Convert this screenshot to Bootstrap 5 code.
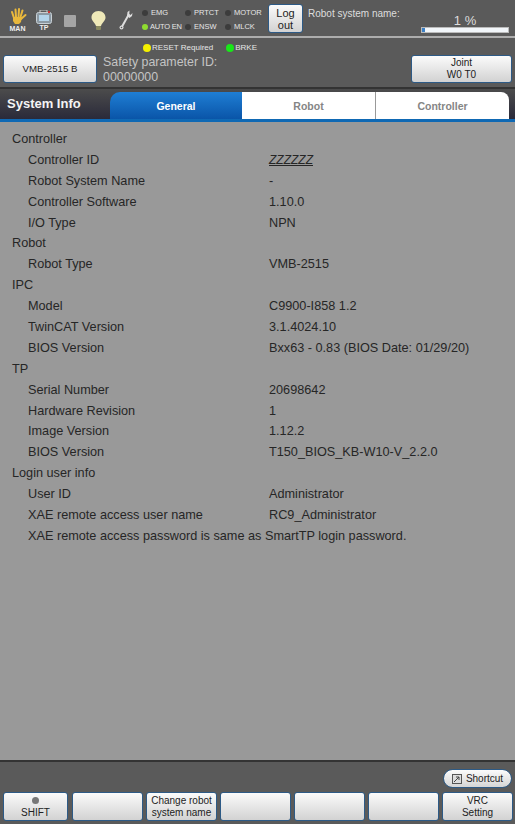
<!DOCTYPE html>
<html lang="en">
<head>
  <meta charset="UTF-8" />
  <title>System Info</title>
  <link href="https://cdn.jsdelivr.net/npm/bootstrap@5.3.0/dist/css/bootstrap.min.css" rel="stylesheet">
  <style>
    html, body { height: 824px; overflow: hidden; }
    body { width: 515px; background: #5a5a5a; font-family: "Liberation Sans", Arial, sans-serif; color: #222; }
    .top-bar { height: 38px; border-bottom: 2px solid #adadad; padding-left: 9px; }
    .tool-icon { flex: none; display: flex; flex-direction: column; align-items: center; color: #eee; font-size: 7px; line-height: 7px; font-weight: 700; }
    .led-grid { display: grid; grid-template-columns: 43px 40px 43px; grid-auto-rows: 14px; margin-left: 9px; margin-top: 6px; flex: none; }
    .led-item { display: flex; align-items: center; gap: 3px; font-size: 7.5px; color: #e6e6e6; white-space: nowrap; }
    .led-tight { gap: 2px; letter-spacing: -.2px; }
    .led { width: 6px; height: 6px; border-radius: 50%; background: #3c3c3c; flex: none; }
    .led-green { background: #8fdc30; }
    .grey-btn { background: linear-gradient(#fbfbfb, #d2d2d2); border: 1px solid #2d5a86; border-radius: 3px; color: #222; text-align: center; padding: 0; }
    .logout-btn { width: 35px; height: 29px; font-size: 11px; line-height: 12px; margin-top: 4px; flex: none; }
    .sys-name { font-size: 10px; color: #ddd; margin-left: 5px; margin-top: 6px; white-space: nowrap; width: 113px; flex: none; }
    .load-box { width: 88px; margin-top: 15px; flex: none; text-align: center; color: #ddd; font-size: 13px; line-height: 12px; }
    .load-track { height: 6px; background: #f2f6fa; border: 1px solid #bbb; }
    .load-fill { width: 3%; height: 100%; background: #3b7fc4; }
    .second-bar { height: 51px; border-bottom: 2px solid #333; padding: 0 3px; }
    .model-btn { width: 94px; height: 28px; font-size: 9.7px; margin-top: 17px; flex: none; }
    .joint-btn { width: 101px; height: 28px; font-size: 10px; line-height: 12px; margin-top: 17px; margin-left: auto; flex: none; }
    .safety-text { font-size: 12.4px; line-height: 15px; color: #c4c4c4; margin-left: 6px; margin-top: 17px; }
    .alarm-row { position: absolute; left: 140px; top: 4px; font-size: 8px; color: #e6e6e6; gap: 13px; white-space: nowrap; }
    .alarm-item { display: flex; align-items: center; gap: 1px; }
    .alarm-led { width: 8px; height: 8px; border-radius: 50%; flex: none; }
    .led-yellow { background: #f4f000; }
    .led-lime { background: #18e818; }
    .second-inner { position: relative; height: 100%; }
    .title-bar { height: 33px; background: linear-gradient(#4c4c4c, #2a2a3a); border-bottom: 3px solid #0f69b4; padding-top: 3px; }
    .title-text { width: 110px; flex: none; color: #f4f4f4; font-size: 13px; font-weight: 700; padding-left: 7px; line-height: 24px; }
    .tab-item { font-size: 10.5px; font-weight: 700; text-align: center; line-height: 29px; height: 27px; background: #fff; color: #858585; flex: none; }
    .tab-gen { width: 132px; background: linear-gradient(#1f7ed4, #0a55a8); color: #fff; border-radius: 10px 0 0 0; }
    .tab-robot { width: 134px; border-right: 1px solid #999; }
    .tab-ctrl { width: 133px; border-radius: 0 8px 0 0; }
    .info-area { height: 638px; background: #999; padding-top: 7px; font-size: 12.7px; color: #262626; }
    .info-row { display: flex; height: 20.9px; line-height: 21px; white-space: nowrap; }
    .info-head { padding-left: 12px; }
    .info-key { width: 269px; padding-left: 28px; flex: none; }
    .val-link { text-decoration: underline; font-style: italic; font-size: 12px; }
    .foot-area { height: 64px; border-top: 2px solid #333; padding: 0 2px 0 3px; }
    .shortcut-btn { width: 69px; height: 19px; border-radius: 10px; background: linear-gradient(#fbfbfb, #d5d5d5); border: 1px solid #2d5a86; font-size: 10px; margin: 7px 1px 4px auto; gap: 4px; color: #222; }
    .foot-btn { height: 29px; font-size: 10px; line-height: 12px; flex: none; width: 71px; }
    .foot-shift { width: 65px; margin-right: 1px; }
    .foot-led { width: 7px; height: 7px; border-radius: 50%; background: #777; display: block; margin: 2px auto 3px; }
  </style>
</head>
<body>
  <div class="top-bar d-flex">
    <div class="d-flex">
      <div class="tool-icon" style="width:17px;margin-top:7px">
        <svg width="18" height="18" viewBox="0 0 18 18"><g stroke="#e9b83c" stroke-width="2" stroke-linecap="round"><path d="M5 11 L3 5"/><path d="M7 10 L6.500 2.500"/><path d="M9.500 10 L10 2"/><path d="M11.500 10 L13.500 3.500"/><path d="M12 12 L16.500 8"/></g><path d="M4 10 H13 L12 15 L10 17 H6 L4 14Z" fill="#e9b83c"/></svg>
        <span>MAN</span>
      </div>
      <div class="tool-icon" style="width:16px;margin:10px 0 0 10px">
        <svg width="16" height="14" viewBox="0 0 16 14"><rect x=".5" y="2.500" width="15" height="11" rx="2" fill="#8c99a3" stroke="#c8d0d6"/><rect x="3" y="5" width="10" height="6" fill="#b4d4ea"/><rect x="4" y="0" width="7" height="2.500" fill="none" stroke="#ccc"/><rect x="12" y="1" width="2" height="2" fill="#c33"/></svg>
        <span>TP</span>
      </div>
      <svg style="margin:15px 0 0 12px" width="12" height="12" viewBox="0 0 12 12"><rect width="12" height="12" rx="1" fill="#a5a5a5"/></svg>
      <svg style="margin:11px 0 0 15px" width="15" height="20" viewBox="0 0 15 20"><path d="M7.500 0 C3 0 .5 3 .5 6.500 C.5 10 4 11.500 5 15 H10 C11 11.500 14.500 10 14.500 6.500 C14.500 3 12 0 7.500 0Z" fill="#efe9b8"/><rect x="5" y="15" width="5" height="4" rx="1" fill="#8a8a60"/></svg>
      <svg style="margin:10px 0 0 13px" width="14" height="20" viewBox="0 0 14 20"><path d="M2.500 17.500 L9.500 5" stroke="#ddd" stroke-width="2" stroke-linecap="round"/><path d="M8 6 L8.500 2 L10.500 .5 L10.300 4 L11.500 5 L13.500 3 L13 6 L10.500 8Z" fill="#ddd"/><circle cx="2.500" cy="17.500" r="2" fill="#ddd"/><circle cx="2.500" cy="17.500" r=".8" fill="#5a5a5a"/></svg>
    </div>
    <div class="led-grid">
      <div class="led-item"><span class="led"></span>EMG</div>
      <div class="led-item"><span class="led"></span>PRTCT</div>
      <div class="led-item"><span class="led"></span>MOTOR</div>
      <div class="led-item led-tight"><span class="led led-green"></span>AUTO EN</div>
      <div class="led-item"><span class="led"></span>ENSW</div>
      <div class="led-item"><span class="led"></span>MLCK</div>
    </div>
    <button class="grey-btn logout-btn">Log<br>out</button>
    <div class="sys-name">Robot system name:</div>
    <div class="load-box">1 %
      <div class="load-track"><div class="load-fill"></div></div>
    </div>
  </div>

  <div class="second-bar">
    <div class="second-inner d-flex">
      <button class="grey-btn model-btn">VMB-2515 B</button>
      <div class="safety-text">Safety parameter ID:<br>00000000</div>
      <button class="grey-btn joint-btn">Joint<br>W0 T0</button>
      <div class="alarm-row d-flex align-items-center">
        <span class="alarm-item"><span class="alarm-led led-yellow"></span>RESET Required</span>
        <span class="alarm-item"><span class="alarm-led led-lime"></span>BRKE</span>
      </div>
    </div>
  </div>

  <div class="title-bar d-flex">
    <div class="title-text">System Info</div>
    <div class="tab-item tab-gen">General</div>
    <div class="tab-item tab-robot">Robot</div>
    <div class="tab-item tab-ctrl">Controller</div>
  </div>

  <div class="info-area" id="info"></div>

  <div class="foot-area">
    <div class="shortcut-btn d-flex align-items-center justify-content-center">
      <svg width="10" height="10" viewBox="0 0 10 10"><rect x=".5" y=".5" width="9" height="9" fill="#ddd" stroke="#555"/><path d="M2 8 L7 3 M4 3 H7 V6" stroke="#444" fill="none"/></svg>
      Shortcut
    </div>
    <div class="d-flex" style="gap:3px">
      <button class="grey-btn foot-btn foot-shift"><span class="foot-led"></span>SHIFT</button>
      <button class="grey-btn foot-btn"></button>
      <button class="grey-btn foot-btn">Change robot<br>system name</button>
      <button class="grey-btn foot-btn"></button>
      <button class="grey-btn foot-btn"></button>
      <button class="grey-btn foot-btn"></button>
      <button class="grey-btn foot-btn">VRC<br>Setting</button>
    </div>
  </div>

  <script>
    const rows = [
      ['Controller'],
      ['Controller ID', '<span class="val-link">ZZZZZZ</span>'],
      ['Robot System Name', '-'],
      ['Controller Software', '1.10.0'],
      ['I/O Type', 'NPN'],
      ['Robot'],
      ['Robot Type', 'VMB-2515'],
      ['IPC'],
      ['Model', 'C9900-I858 1.2'],
      ['TwinCAT Version', '3.1.4024.10'],
      ['BIOS Version', 'Bxx63 - 0.83 (BIOS Date: 01/29/20)'],
      ['TP'],
      ['Serial Number', '20698642'],
      ['Hardware Revision', '1'],
      ['Image Version', '1.12.2'],
      ['BIOS Version', 'T150_BIOS_KB-W10-V_2.2.0'],
      ['Login user info'],
      ['User ID', 'Administrator'],
      ['XAE remote access user name', 'RC9_Administrator'],
      ['XAE remote access password is same as SmartTP login password.', '']
    ];
    document.getElementById('info').innerHTML = rows.map(r => r.length === 1
      ? `<div class="info-row info-head">${r[0]}</div>`
      : `<div class="info-row"><div class="info-key">${r[0]}</div><div>${r[1]}</div></div>`).join('');
  </script>
  <script src="https://cdn.jsdelivr.net/npm/bootstrap@5.3.0/dist/js/bootstrap.bundle.min.js"></script>
</body>
</html>
